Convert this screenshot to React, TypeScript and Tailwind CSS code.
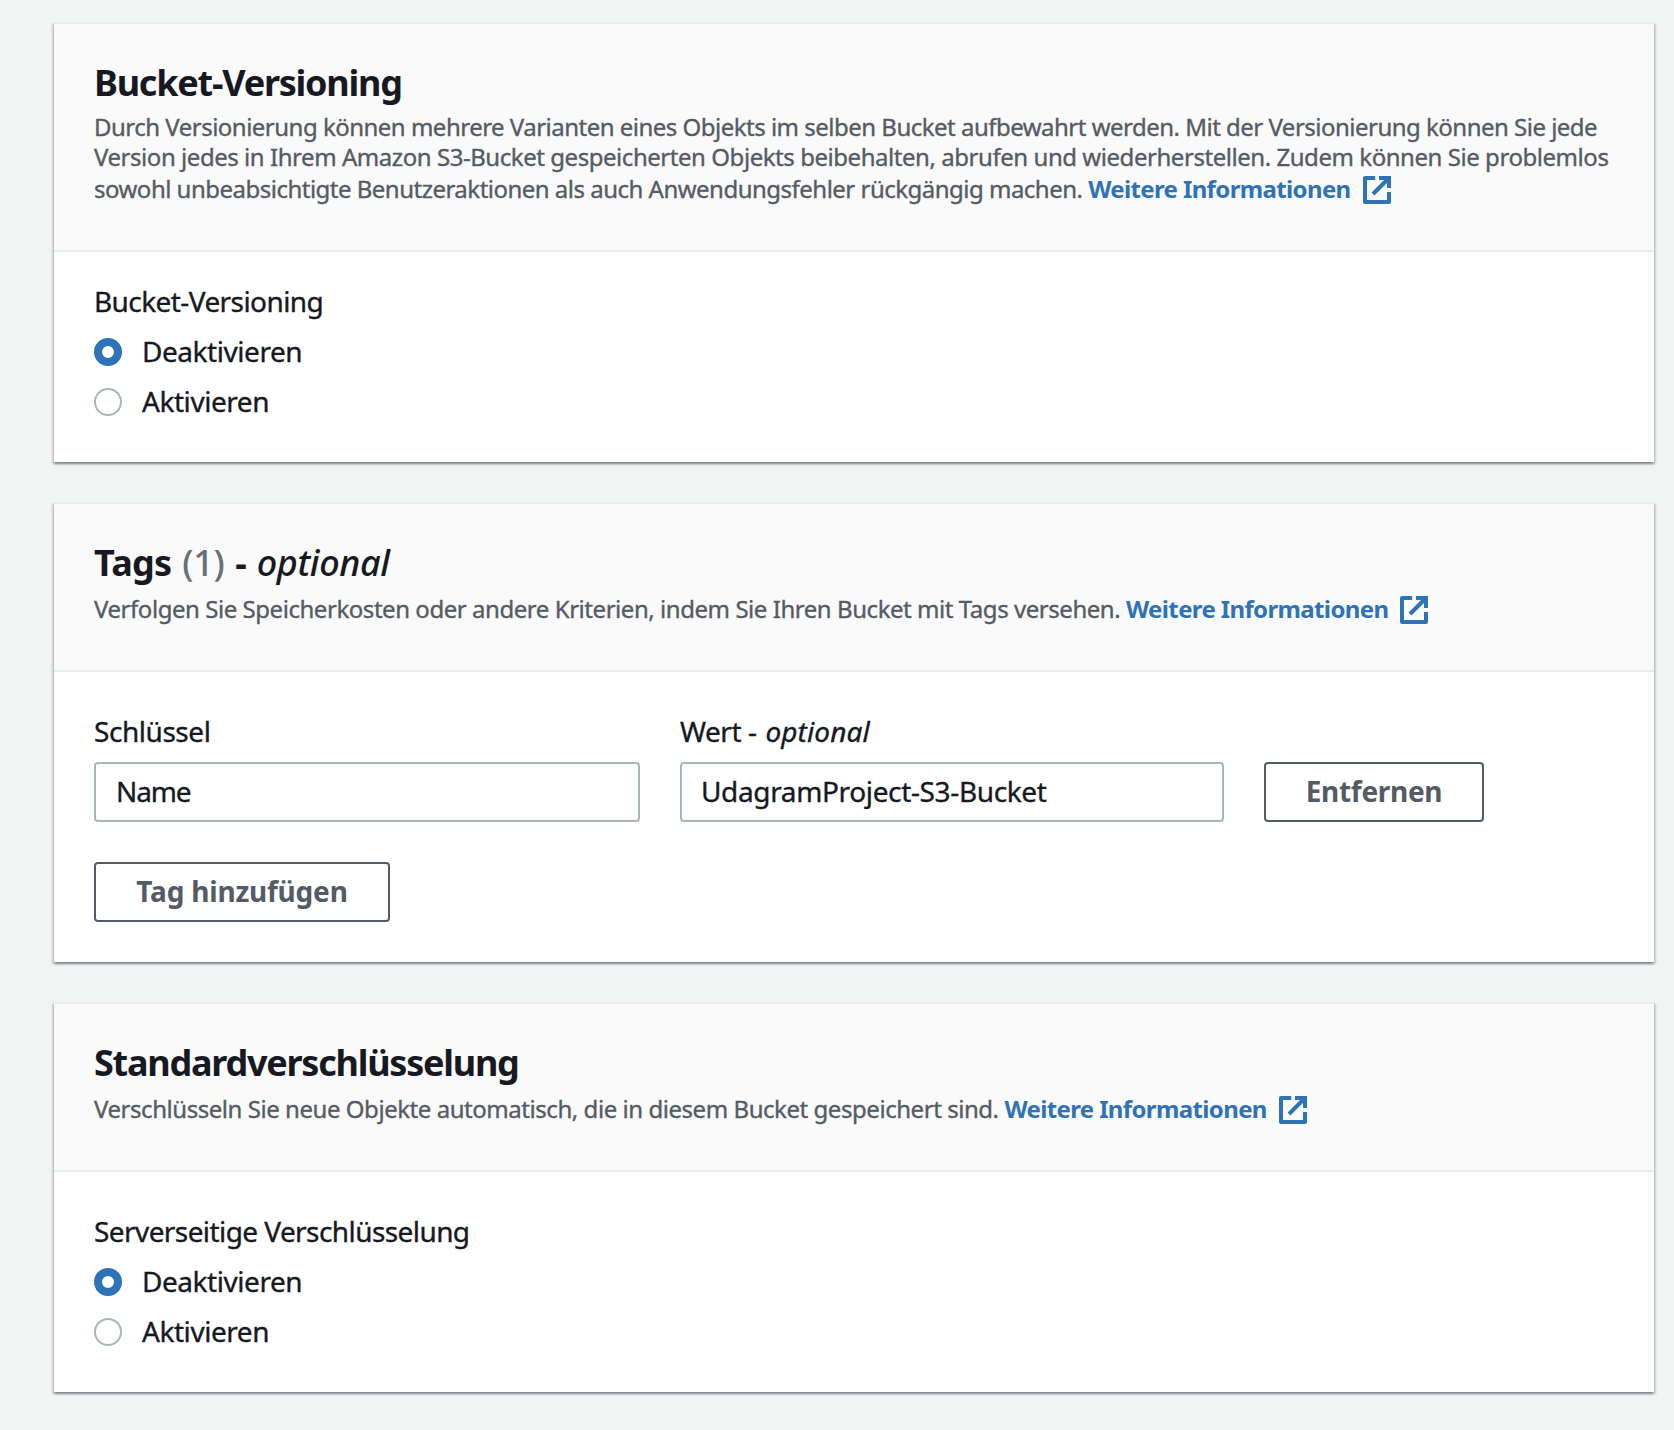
import React, { useState } from "react";
import type { ReactNode } from "react";

function ExternalIcon() {
  return (
    <svg
      viewBox="0 0 16 16"
      className="ml-[10px] inline-block size-8 align-[-8px]"
      fill="none"
      stroke="currentColor"
      strokeWidth="2"
      aria-hidden="true"
    >
      <path d="M9 2h5v5M6 10l8-8" />
      <path d="M14 9.048V14H2V2h5.1" strokeLinejoin="round" />
    </svg>
  );
}

function MoreInfo() {
  return (
    <a href="#" className="font-bold tracking-[-0.63px] text-[#2e72b8] [-webkit-text-stroke:0]">
      Weitere Informationen
      <ExternalIcon />
    </a>
  );
}

function Card({ title, description, children }: { title: ReactNode; description: ReactNode; children: ReactNode }) {
  return (
    <section className="border-t-2 border-[#eaeded] bg-white shadow-[0_2px_2px_0_rgba(0,28,36,0.3),2px_2px_2px_0_rgba(0,28,36,0.15),-2px_2px_2px_0_rgba(0,28,36,0.15)]">
      <header className="border-b-2 border-[#eaeded] bg-[#fafafa] px-10 pt-[37px] pb-11">
        <h2 className="text-[36px] leading-[44px] font-bold tracking-[-1.24px]">{title}</h2>
        <div className="mt-[7px] text-2xl leading-[34px] tracking-[-0.45px] whitespace-nowrap text-[#545b64] [-webkit-text-stroke:0.35px]">
          {description}
        </div>
      </header>
      {children}
    </section>
  );
}

function RadioGroup({ label }: { label: string }) {
  const [selected, setSelected] = useState("Deaktivieren");
  return (
    <div
      role="radiogroup"
      aria-label={label}
      className="text-[28px] leading-10 tracking-[-0.58px] [-webkit-text-stroke:0.35px]"
    >
      <div className="flex h-[50px] items-center pb-0.5">{label}</div>
      {["Deaktivieren", "Aktivieren"].map((option) => (
        <div
          key={option}
          role="radio"
          aria-checked={selected === option}
          onClick={() => setSelected(option)}
          className="flex h-[50px] items-center gap-5"
        >
          <span
            className={
              selected === option
                ? "size-7 rounded-full border-8 border-[#2e72b8] bg-white"
                : "size-7 rounded-full border-2 border-[#aab7b8] bg-white"
            }
          />
          <span className="pb-0.5 tracking-[-0.45px]">{option}</span>
        </div>
      ))}
    </div>
  );
}

const fieldClass =
  "block h-[60px] rounded-[4px] border-2 border-[#aab7b8] bg-white pr-5 pb-0.5 text-[28px] leading-10 outline-none [-webkit-text-stroke:0.35px]";
const labelClass = "mb-[11px] block text-[28px] leading-10 tracking-[-0.45px] [-webkit-text-stroke:0.35px]";
const buttonClass =
  "h-[60px] rounded-[4px] border-2 border-[#545b64] bg-white pb-0.5 text-center text-[28px] leading-10 font-bold text-[#545b64]";

export default function App() {
  return (
    <main className='flex h-[1430px] w-[1674px] flex-col gap-10 overflow-hidden bg-[#f2f4f3] pt-[22px] pr-5 pl-[54px] font-["Noto_Sans",sans-serif] text-[#16191f]'>
      <Card
        title="Bucket-Versioning"
        description={
          <>
            <p className="leading-[30px] tracking-[-0.51px]">
              Durch Versionierung können mehrere Varianten eines Objekts im selben Bucket aufbewahrt werden. Mit der
              Versionierung können Sie jede
            </p>
            <p className="leading-[30px]">
              Version jedes in Ihrem Amazon S3-Bucket gespeicherten Objekts beibehalten, abrufen und wiederherstellen.
              Zudem können Sie problemlos
            </p>
            <p className="tracking-[-0.51px]">
              sowohl unbeabsichtigte Benutzeraktionen als auch Anwendungsfehler rückgängig machen. <MoreInfo />
            </p>
          </>
        }
      >
        <div className="px-10 pt-[25px] pb-[35px]">
          <RadioGroup label="Bucket-Versioning" />
        </div>
      </Card>

      <Card
        title={
          <span className="tracking-[-0.7px] [word-spacing:2px]">
            Tags <span className="font-medium tracking-[-0.2px] text-[#687078]">(1)</span> -{" "}
            <span className="font-medium tracking-[-0.4px] italic">optional</span>
          </span>
        }
        description={
          <p>
            Verfolgen Sie Speicherkosten oder andere Kriterien, indem Sie Ihren Bucket mit Tags versehen. <MoreInfo />
          </p>
        }
      >
        <div className="px-10 pt-[39px] pb-10">
          <div className="flex items-end gap-10">
            <div>
              <label className={labelClass} htmlFor="key">Schlüssel</label>
              <input id="key" className={`${fieldClass} w-[546px] pl-5 tracking-[-1.1px]`} defaultValue="Name" />
            </div>
            <div>
              <label className={labelClass} htmlFor="value">
                Wert - <span className="ml-0.5 tracking-[0.1px] italic">optional</span>
              </label>
              <input
                id="value"
                className={`${fieldClass} w-[544px] pl-[19px] tracking-[-0.36px]`}
                defaultValue="UdagramProject-S3-Bucket"
              />
            </div>
            <button className={`${buttonClass} w-[220px] tracking-[-0.3px]`}>Entfernen</button>
          </div>
          <button className={`${buttonClass} mt-10 w-[296px] tracking-[-0.2px]`}>Tag hinzufügen</button>
        </div>
      </Card>

      <Card
        title="Standardverschlüsselung"
        description={
          <p>
            Verschlüsseln Sie neue Objekte automatisch, die in diesem Bucket gespeichert sind. <MoreInfo />
          </p>
        }
      >
        <div className="px-10 py-[35px]">
          <RadioGroup label="Serverseitige Verschlüsselung" />
        </div>
      </Card>
    </main>
  );
}
